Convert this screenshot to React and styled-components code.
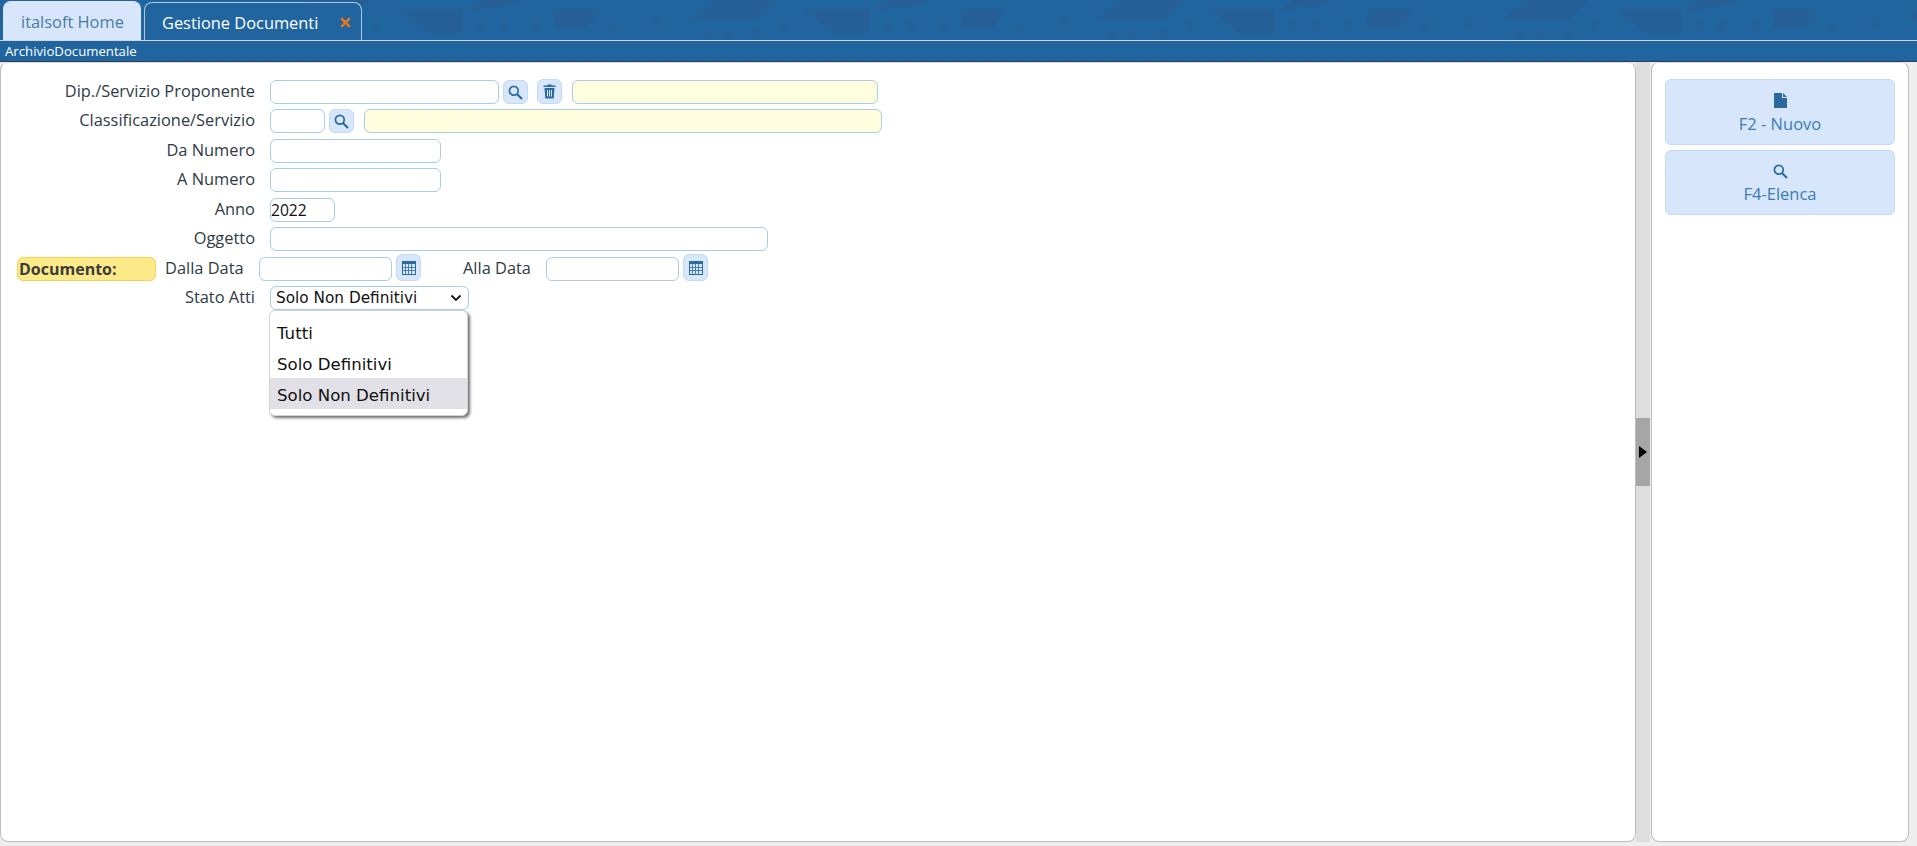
import React from 'react';
import styled, { createGlobalStyle } from 'styled-components';

const GlobalStyle = createGlobalStyle`
  html, body {
    margin: 0;
    height: 100%;
    overflow: hidden;
  }
  body {
    font-family: "Open Sans", "Liberation Sans", sans-serif;
    background: #eeeeee;
  }
`

const Page = styled.div`
  width: 1917px;
  height: 846px;
  display: flex;
  flex-direction: column;
`

const Header = styled.header`
  position: relative;
  height: 41px;
  flex: none;
  background: #20659f;
  border-bottom: 1px solid #cfd6dc;
  box-sizing: border-box;
  display: flex;
  align-items: flex-end;
  padding-left: 3px;
  gap: 3px;
  overflow: hidden;
`

const Skyline = styled.svg`
  position: absolute;
  left: 0;
  top: 0;
  opacity: 0.7;
`

const Tab = styled.div`
  position: relative;
  height: 39px;
  box-sizing: border-box;
  display: flex;
  align-items: center;
  font-size: 16.4px;
  border-radius: 8px 8px 0 0;
  border: 1px solid ${props => props.$active ? '#a9c9e4' : '#d7e6fb'};
  border-bottom: none;
  margin-bottom: ${props => props.$active ? '-1px' : '0'};
  background: ${props => props.$active ? '#20659f' : '#d7e6fb'};
  color: ${props => props.$active ? '#ffffff' : '#4a7ba6'};
  width: ${props => props.$width}px;
  padding-left: ${props => props.$pad}px;
`

const TabClose = styled.svg`
  position: absolute;
  right: 10px;
  top: 14px;
`

const SubBar = styled.div`
  height: 21px;
  flex: none;
  background: #20659f;
  border-bottom: 1px solid #2a3f50;
  box-sizing: border-box;
  color: #ffffff;
  font-size: 13.2px;
  line-height: 20px;
  padding-left: 5px;
`

const Body = styled.div`
  flex: 1;
  display: flex;
  min-height: 0;
  padding-bottom: 4px;
`

const MainPanel = styled.main`
  position: relative;
  width: 1636px;
  flex: none;
  background: #ffffff;
  border: 1px solid #bdbdbd;
  border-top-color: #dddddd;
  border-radius: 8px;
  box-sizing: border-box;
  padding: 17px 0 0 0;
`

const Splitter = styled.div`
  width: 14px;
  flex: none;
  background: #dedede;
  display: flex;
  align-items: center;
`

const Handle = styled.div`
  width: 14px;
  height: 68px;
  background: #a6a6a6;
  display: flex;
  align-items: center;
  justify-content: center;
`

const Arrow = styled.div`
  width: 0;
  height: 0;
  border-left: 8px solid #000000;
  border-top: 6.5px solid transparent;
  border-bottom: 6.5px solid transparent;
`

const SidePanel = styled.aside`
  width: 258px;
  margin-left: 1px;
  flex: none;
  background: #ffffff;
  border: 1px solid #bdbdbd;
  border-top-color: #dddddd;
  border-radius: 8px;
  box-sizing: border-box;
  padding: 16px 13px 0 13px;
  display: flex;
  flex-direction: column;
  gap: 5px;
`

const ActionButton = styled.button`
  height: ${props => props.$height}px;
  background: #d7e6fb;
  border: 1px solid #c3daf2;
  border-radius: 6px;
  padding: 4px 0 0;
  display: flex;
  flex-direction: column;
  align-items: center;
  justify-content: center;
  gap: ${props => props.$gap}px;
  color: #3a7cb4;
  font-family: inherit;
  font-size: 16.5px;
  line-height: 22px;

  svg {
    color: #2a6a9f;
  }
`

const Row = styled.div`
  height: 29.45px;
  display: flex;
  align-items: flex-start;
`

const Label = styled.label`
  width: 254px;
  flex: none;
  text-align: right;
  font-size: 16.4px;
  line-height: 22px;
  color: #2f3b45;
  margin-right: 15px;
`

const Field = styled.div`
  width: ${props => props.$width}px;
  height: 24px;
  flex: none;
  box-sizing: border-box;
  margin-left: ${props => props.$left || 0}px;
  background: ${props => props.$readonly ? '#fefede' : '#ffffff'};
  border: 1px solid #a9cbe4;
  border-radius: 6px;
  font-size: 15.6px;
  line-height: 23px;
  color: #111111;
`

const IconButton = styled.div`
  width: 25px;
  height: ${props => 24 + props.$raise}px;
  flex: none;
  box-sizing: border-box;
  margin-left: ${props => props.$left}px;
  margin-top: ${props => -props.$raise}px;
  padding-top: ${props => props.$raise > 1 ? 2 : 0}px;
  background: #d7e6fb;
  border: 1px solid #c3daf2;
  border-radius: 6px;
  color: #2a6a9f;
  display: flex;
  align-items: center;
  justify-content: center;
`

const Badge = styled.div`
  width: 139px;
  height: 24px;
  flex: none;
  box-sizing: border-box;
  margin-left: 16px;
  background: #fcea88;
  border: 1px solid #f7d154;
  border-radius: 6px;
  color: #3c3c3c;
  font-size: 16px;
  font-weight: 700;
  line-height: 22px;
  padding-left: 1px;
`

const InlineLabel = styled.label`
  width: ${props => props.$width}px;
  flex: none;
  margin-left: ${props => props.$left}px;
  font-size: 16.4px;
  line-height: 22px;
  color: #2f3b45;
`

const SelectBox = styled.div`
  position: relative;
  width: 199px;
  height: 24px;
  flex: none;
  box-sizing: border-box;
  background: #ffffff;
  border: 1px solid #a9cbe4;
  border-radius: 6px;
  font-family: "DejaVu Sans", sans-serif;
  font-size: 15.3px;
  line-height: 22px;
  color: #111111;
  padding-left: 5px;
`

const Chevron = styled.svg`
  position: absolute;
  right: 6px;
  top: 7px;
`

const Menu = styled.ul`
  position: absolute;
  left: -2px;
  top: 23px;
  width: 199px;
  box-sizing: border-box;
  margin: 0;
  padding: 5px 0 6px;
  list-style: none;
  background: #ffffff;
  border: 1px solid #d4d4d4;
  border-radius: 6px;
  box-shadow: 2px 2px 3px #6f6f6f;
  z-index: 2;
`

const MenuItem = styled.li`
  height: 31px;
  line-height: 35px;
  padding-left: 7px;
  background: ${props => props.$selected ? '#e0e0e6' : 'transparent'};
  font-size: 16.6px;
  color: #111111;
`

const FileIcon = () => (
  <svg width="13" height="15" viewBox="0 0 13 15">
    <path d="M0 0H8V5H13V15H0Z M9 0L13 4H9Z" fill="currentColor" />
  </svg>
)

const TrashIcon = () => (
  <svg width="13" height="15" viewBox="0 0 13 15">
    <path d="M4.5 1.5V.5H8.5V1.5H12.5V3H.5V1.5Z M1.5 4H11.5L10.7 14.5H2.3Z" fill="currentColor" />
    <path d="M4.5 6V12.5M6.5 6V12.5M8.5 6V12.5" stroke="#d7e6fb" strokeWidth="1" />
  </svg>
)

const CalendarIcon = () => (
  <svg width="14" height="14" viewBox="0 0 14 14">
    <rect x=".5" y=".5" width="13" height="13" fill="none" stroke="currentColor" />
    <rect x="0" y="0" width="14" height="3" fill="currentColor" />
    <path d="M0 6.5H14M0 9.5H14M3.5 3V14M6.5 3V14M9.5 3V14" stroke="currentColor" strokeWidth=".8" />
  </svg>
)

const SearchIcon = () => (
  <svg width="15" height="15" viewBox="0 0 15 15" fill="none" stroke="currentColor">
    <circle cx="5.8" cy="5.8" r="4.4" strokeWidth="1.7" />
    <path d="M9 9L14 14" strokeWidth="2.2" />
  </svg>
)

const App = () => (
  <Page>
    <GlobalStyle />
    <Header>
      <Skyline width="1917" height="40" viewBox="0 0 1917 40">
        <defs>
          <pattern id="skyline" x="-9" y="0" width="406" height="40" patternUnits="userSpaceOnUse">
            <g fill="#2a5f95">
              <path d="M0 9H66V33H30Z" />
              <path d="M70 9L85 0H125L108 6H90V9Z" />
              <path d="M158 10H203L190 28H158Z" />
              <path d="M293 19L318 0H380L362 19Z" />
              <g opacity=".55">
                <rect x="80" y="20" width="8" height="13" rx="3" />
                <rect x="103" y="20" width="8" height="13" rx="3" />
                <rect x="136" y="20" width="8" height="13" rx="3" />
                <circle cx="216" cy="28" r="5" />
                <circle cx="260" cy="22" r="5" />
                <rect x="306" y="30" width="8" height="10" rx="3" />
                <rect x="326" y="30" width="8" height="10" rx="3" />
                <rect x="355" y="28" width="8" height="12" rx="3" />
                <rect x="383" y="20" width="6" height="13" rx="3" />
              </g>
            </g>
          </pattern>
        </defs>
        <rect width="1917" height="40" fill="url(#skyline)" />
      </Skyline>
      <Tab $width={138} $pad={17}>italsoft Home</Tab>
      <Tab $active $width={218} $pad={17}>
        Gestione Documenti
        <TabClose width="11" height="11" viewBox="0 0 11 11">
          <path d="M1.2 1.2L9.8 9.8M9.8 1.2L1.2 9.8" stroke="#e2791f" strokeWidth="2.6" />
        </TabClose>
      </Tab>
    </Header>
    <SubBar>ArchivioDocumentale</SubBar>
    <Body>
      <MainPanel>
        <Row>
          <Label>Dip./Servizio Proponente</Label>
          <Field $width={229} />
          <IconButton $left={4} $raise={0}><SearchIcon /></IconButton>
          <IconButton $left={9} $raise={1}><TrashIcon /></IconButton>
          <Field $width={306} $left={10} $readonly />
        </Row>
        <Row>
          <Label>Classificazione/Servizio</Label>
          <Field $width={55} />
          <IconButton $left={4} $raise={0}><SearchIcon /></IconButton>
          <Field $width={518} $left={10} $readonly />
        </Row>
        <Row>
          <Label>Da Numero</Label>
          <Field $width={171} />
        </Row>
        <Row>
          <Label>A Numero</Label>
          <Field $width={171} />
        </Row>
        <Row>
          <Label>Anno</Label>
          <Field $width={65}>2022</Field>
        </Row>
        <Row>
          <Label>Oggetto</Label>
          <Field $width={498} />
        </Row>
        <Row>
          <Badge>Documento:</Badge>
          <InlineLabel $left={9} $width={94}>Dalla Data</InlineLabel>
          <Field $width={133} />
          <IconButton $left={4} $raise={3}><CalendarIcon /></IconButton>
          <InlineLabel $left={42} $width={83}>Alla Data</InlineLabel>
          <Field $width={133} />
          <IconButton $left={4} $raise={3}><CalendarIcon /></IconButton>
        </Row>
        <Row>
          <Label>Stato Atti</Label>
          <SelectBox>
            Solo Non Definitivi
            <Chevron width="12" height="8" viewBox="0 0 12 8">
              <path d="M1.5 1.5L6 6L10.5 1.5" fill="none" stroke="#111" strokeWidth="1.8" />
            </Chevron>
            <Menu>
              <MenuItem>Tutti</MenuItem>
              <MenuItem>Solo Definitivi</MenuItem>
              <MenuItem $selected>Solo Non Definitivi</MenuItem>
            </Menu>
          </SelectBox>
        </Row>
      </MainPanel>
      <Splitter>
        <Handle><Arrow /></Handle>
      </Splitter>
      <SidePanel>
        <ActionButton $height={66} $gap={5}>
          <FileIcon />
          F2 - Nuovo
        </ActionButton>
        <ActionButton $height={65} $gap={4}>
          <SearchIcon />
          F4-Elenca
        </ActionButton>
      </SidePanel>
    </Body>
  </Page>
);

export default App;
